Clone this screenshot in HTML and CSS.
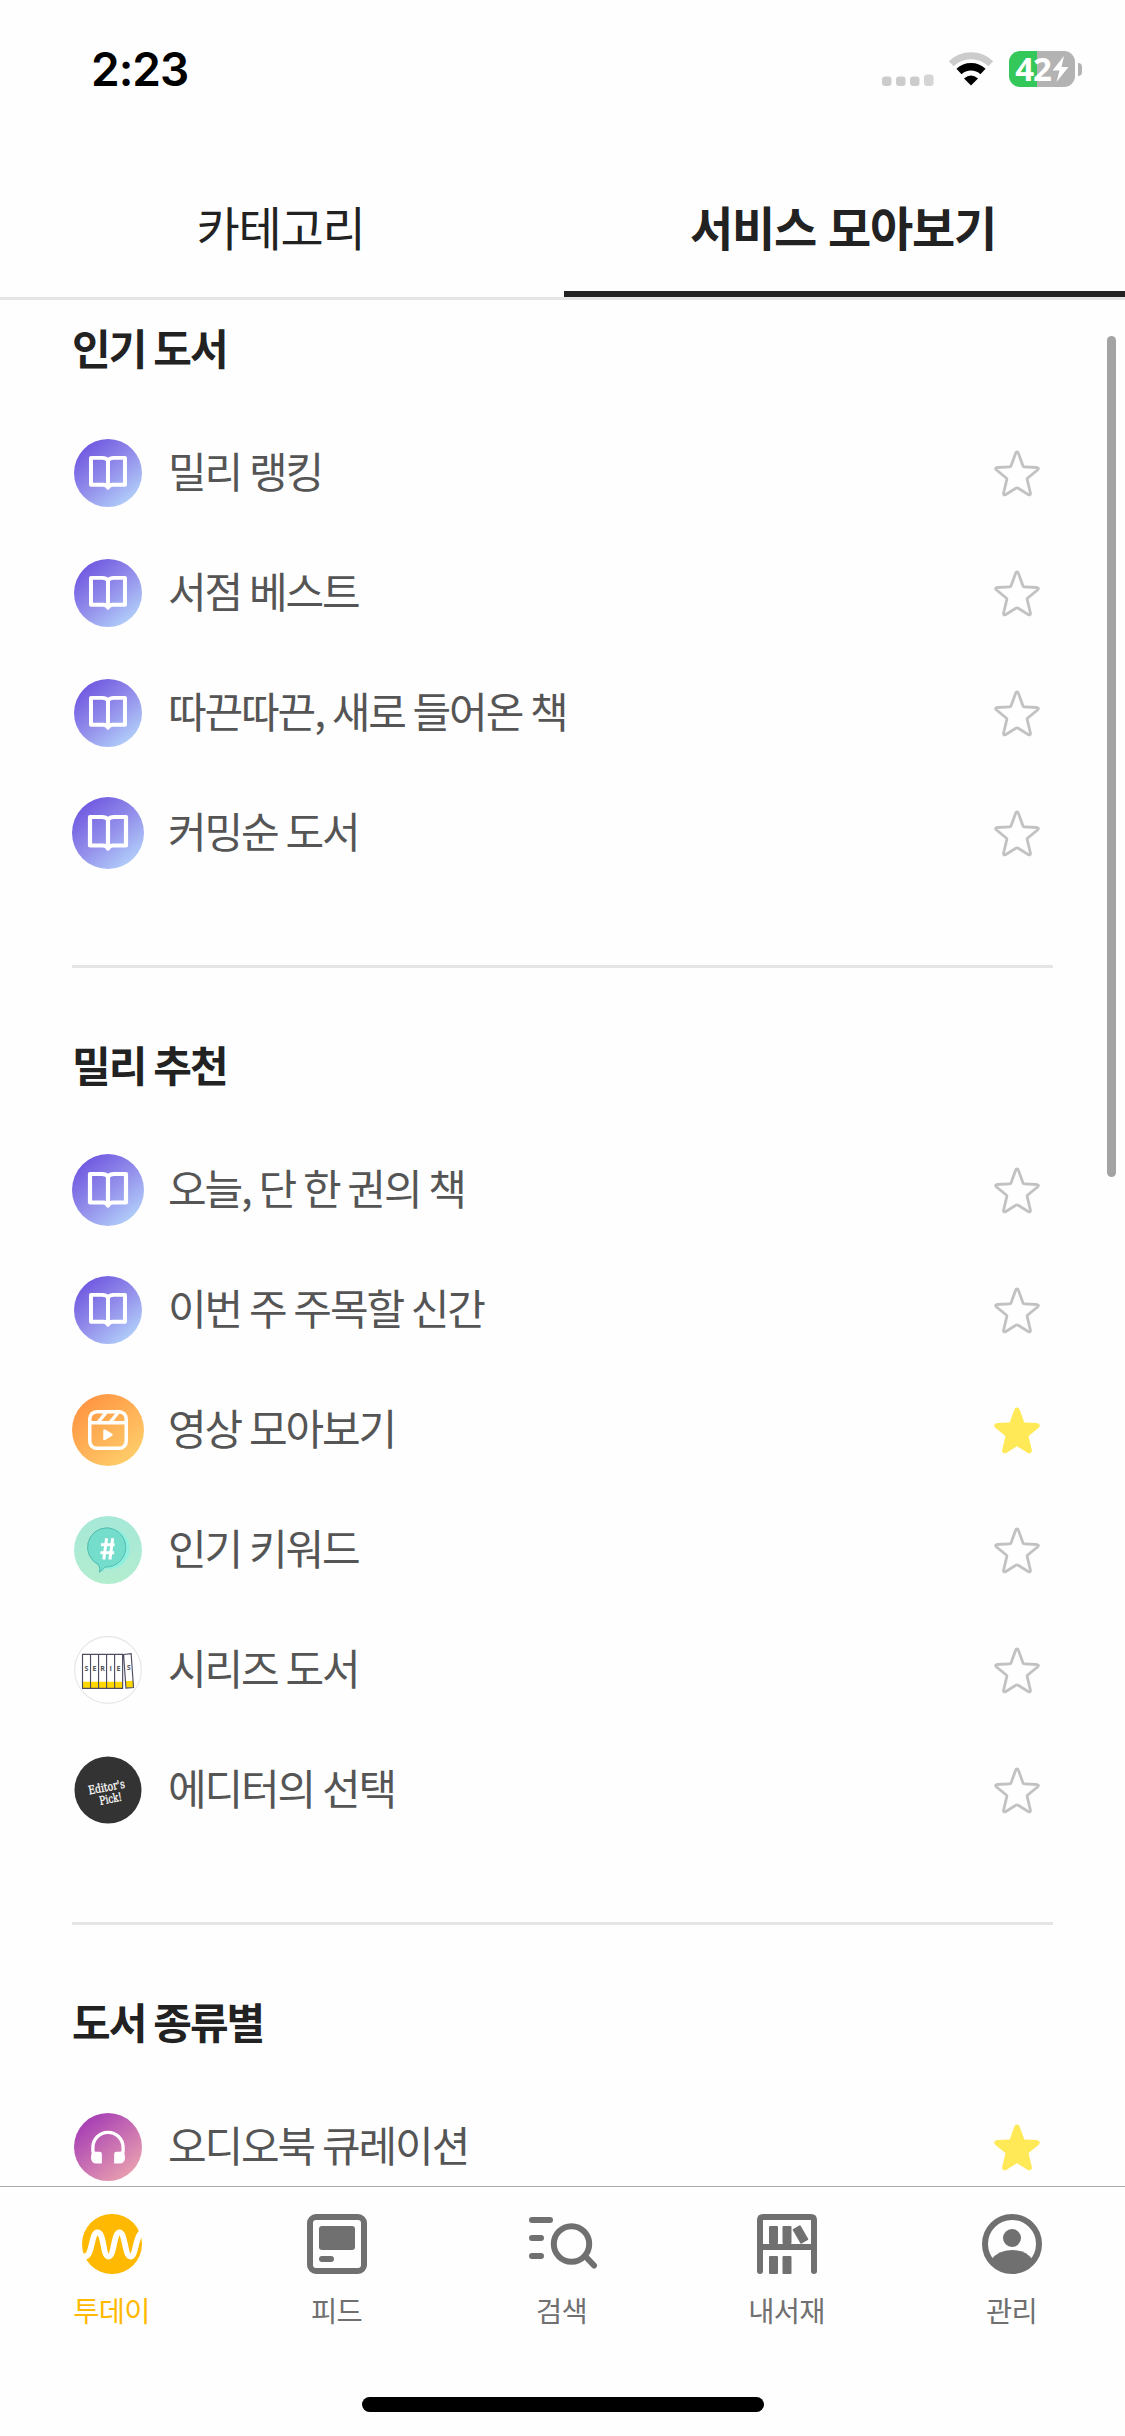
FILE: index.html
```html
<!DOCTYPE html>
<html lang="ko">
<head>
<meta charset="utf-8">
<title>서비스 모아보기</title>
<link rel="stylesheet" href="styles.css">
</head>
<body>
<svg class="defs" width="0" height="0" aria-hidden="true">
  <defs>
    <linearGradient id="g-book" x1="0.15" y1="0.1" x2="0.85" y2="0.95"><stop offset="0" stop-color="#6f58e0"/><stop offset="0.5" stop-color="#9490eb"/><stop offset="1" stop-color="#b3d3fb"/></linearGradient>
    <linearGradient id="g-video" x1="0.15" y1="0.1" x2="0.85" y2="0.95"><stop offset="0" stop-color="#ff9542"/><stop offset="1" stop-color="#ffcf6c"/></linearGradient>
    <linearGradient id="g-audio" x1="0.15" y1="0.1" x2="0.85" y2="0.95"><stop offset="0" stop-color="#a63db5"/><stop offset="1" stop-color="#eba3af"/></linearGradient>
    <linearGradient id="g-key" x1="0.5" y1="0" x2="0.5" y2="1"><stop offset="0" stop-color="#a6e8d8"/><stop offset="1" stop-color="#b2edcf"/></linearGradient>
  </defs>
  <symbol id="book" viewBox="0 0 72 72">
    <circle cx="36" cy="36" r="36" fill="url(#g-book)"/>
    <path d="M36 22.500C34.500 20.700 32.500 20 30 20H18V48.500H31C33.500 48.500 35 49.500 36 51.500C37 49.500 38.500 48.500 41 48.500H54V20H42C39.500 20 37.500 20.700 36 22.500V51" fill="none" stroke="#fff" stroke-width="4.200" stroke-linejoin="round"/>
  </symbol>
  <symbol id="video" viewBox="0 0 72 72">
    <circle cx="36" cy="36" r="36" fill="url(#g-video)"/>
    <g fill="none" stroke="#fff" stroke-width="3.500"><rect x="17.750" y="17.750" width="36.500" height="36.500" rx="7"/><path d="M17.500 28.700H54.500M26 28.500L34.500 18M38 28.500L46.500 18"/></g>
    <path d="M32.500 36.500L39.500 40.700L32.500 45Z" fill="#fff" stroke="#fff" stroke-width="2.500" stroke-linejoin="round"/>
  </symbol>
  <symbol id="keyword" viewBox="0 0 72 72">
    <circle cx="36" cy="36" r="36" fill="url(#g-key)"/>
    <path d="M37 13A21.500 21.500 0 1 1 33 55.500Q31 57.500 27 60Q28.500 56 27 53.500A22 22 0 0 1 37 13Z" fill="#8ff0df"/>
    <path d="M35 12.500A20.500 20.500 0 1 1 33 54Q31 56.500 27 59.500Q28 55 26 51.500A20.500 20.500 0 0 1 35 12.500Z" fill="#74ddcc" stroke="#4db9ab" stroke-width="1"/>
    <path d="M34.500 23.500L31.500 46M41 23.500L38 46M28.500 30.500H43M28 39H42.500" fill="none" stroke="#fff" stroke-width="3.200"/>
  </symbol>
  <symbol id="audio" viewBox="0 0 72 72">
    <circle cx="36" cy="36" r="36" fill="url(#g-audio)"/>
    <path d="M20 42V36.500A16 16 0 0 1 52 36.500V42" fill="none" stroke="#fff" stroke-width="3.500"/>
    <path d="M23 41H27Q29.500 41 29.500 43.500V53.500H24Q18 53.500 18 47Q18 43 20 40ZM49 41H45Q42.500 41 42.500 43.500V53.500H48Q54 53.500 54 47Q54 43 52 40Z" fill="#fff"/>
  </symbol>
  <symbol id="star" viewBox="0 0 48 48">
    <path d="M24 3Q25 3 25.500 4.500L30 17Q30.300 17.800 31.200 17.800L44 18.500Q46.500 19 44.500 21L34.700 29Q34 29.700 34.200 30.700L37.500 44.500Q37.500 46.600 35.500 45.700L25.200 39.300Q24 38.600 22.800 39.300L12.500 45.700Q10.500 46.600 10.500 44.500L13.800 30.700Q14 29.700 13.300 29L3.500 21Q1.500 19 4 18.500L16.800 17.800Q17.700 17.800 18 17L22.500 4.500Q23 3 24 3Z"/>
  </symbol>
</svg>

<div class="screen">
  <header class="status">
    <div class="time">2:23</div>
    <div class="indicators">
      <svg class="cell" width="52" height="12" viewBox="0 0 52 12" fill="#ccc"><rect x="0" y="2.500" width="9.500" height="9.500" rx="3"/><rect x="14" y="2.500" width="9.500" height="9.500" rx="3"/><rect x="28" y="2.500" width="9.500" height="9.500" rx="3"/><rect x="42" y="0.500" width="9.500" height="11.500" rx="3" fill="#d5d5d5"/></svg>
      <svg class="wifi" width="46" height="34" viewBox="0 0 46 34"><path d="M3.200 11.800A28.500 28.500 0 0 1 42.800 11.800" fill="none" stroke="#ccc" stroke-width="7"/><path d="M11 19.500A17.500 17.500 0 0 1 35 19.500" fill="none" stroke="#000" stroke-width="7.500"/><path d="M23 33.500L16 26.500Q23 20.500 30 26.500Z" fill="#000"/></svg>
      <div class="battery"><div class="cellbody"><span>42</span><svg width="17" height="26" viewBox="0 0 17 26"><path d="M12 0L0.500 14.500H7.500L4.500 26L16.500 11H9.500Z" fill="#fff"/></svg></div><div class="cap"></div></div>
    </div>
  </header>

  <nav class="tabs"><div class="tab">카테고리</div><div class="tab active">서비스 모아보기</div></nav>

  <main class="content">
    <section>
      <h2>인기 도서</h2>
      <ul>
        <li><svg class="ico"><use href="#book"/></svg><span>밀리 랭킹</span><svg class="star"><use href="#star"/></svg></li>
        <li><svg class="ico"><use href="#book"/></svg><span>서점 베스트</span><svg class="star"><use href="#star"/></svg></li>
        <li><svg class="ico"><use href="#book"/></svg><span>따끈따끈, 새로 들어온 책</span><svg class="star"><use href="#star"/></svg></li>
        <li><svg class="ico large"><use href="#book"/></svg><span>커밍순 도서</span><svg class="star"><use href="#star"/></svg></li>
      </ul>
    </section>
    <section>
      <h2>밀리 추천</h2>
      <ul>
        <li><svg class="ico large"><use href="#book"/></svg><span>오늘, 단 한 권의 책</span><svg class="star"><use href="#star"/></svg></li>
        <li><svg class="ico"><use href="#book"/></svg><span>이번 주 주목할 신간</span><svg class="star"><use href="#star"/></svg></li>
        <li><svg class="ico large"><use href="#video"/></svg><span>영상 모아보기</span><svg class="star on"><use href="#star"/></svg></li>
        <li><svg class="ico"><use href="#keyword"/></svg><span>인기 키워드</span><svg class="star"><use href="#star"/></svg></li>
        <li>
          <svg class="ico" viewBox="0 0 72 72">
            <circle cx="36" cy="36" r="35.300" fill="#fff" stroke="#e6e6e8" stroke-width="1.200"/>
            <path d="M9.500 48.500H51.500V55.500H9.500ZM54.500 48L62.500 47.500L63 54.500L55.500 55Z" fill="#ffd800"/>
            <path d="M9 19.500H51.500V55.500H9ZM17.500 19.500V55.500M26 19.500V55.500M34.500 19.500V55.500M43 19.500V55.500M52.500 19.600L60.500 18.600L63 54.500L55 55.200Z" fill="none" stroke="#4c4b60" stroke-width="1.200"/>
            <g class="series-text"><text x="13.300" y="37">S</text><text x="21.700" y="37">E</text><text x="30.200" y="37">R</text><text x="38.700" y="37">I</text><text x="47.200" y="37">E</text><text x="58" y="36.500">S</text></g>
          </svg>
          <span>시리즈 도서</span><svg class="star"><use href="#star"/></svg></li>
        <li>
          <svg class="ico" viewBox="0 0 72 72">
            <circle cx="36" cy="36" r="35.500" fill="#333"/>
            <g class="editor-text" transform="rotate(-11 36 36)"><text x="35" y="37" textLength="39" lengthAdjust="spacingAndGlyphs">Editor's</text><text x="37" y="50" textLength="24" lengthAdjust="spacingAndGlyphs">Pick!</text></g>
          </svg>
          <span>에디터의 선택</span><svg class="star"><use href="#star"/></svg></li>
      </ul>
    </section>
    <section>
      <h2>도서 종류별</h2>
      <ul>
        <li><svg class="ico"><use href="#audio"/></svg><span>오디오북 큐레이션</span><svg class="star on"><use href="#star"/></svg></li>
      </ul>
    </section>
    <div class="scrollbar"></div>
  </main>

  <footer class="bottom">
    <nav class="menu">
      <div class="item today"><svg width="60" height="60" viewBox="0 0 60 60"><circle cx="30" cy="30" r="30" fill="#ffb900"/><path d="M1 42C11 46 8.500 18.500 15.500 18.500S20.500 42.500 26.500 42.500S31.500 18.500 37.500 18.500S42.500 42.500 48.500 42.500S53 20 61 18" fill="none" stroke="#fff" stroke-width="5.800"/></svg><span>투데이</span></div>
      <div class="item"><svg width="60" height="60" viewBox="0 0 60 60"><rect x="3" y="3" width="54" height="54" rx="6" fill="none" stroke="#707070" stroke-width="6"/><rect x="12" y="12" width="36" height="24" rx="3" fill="#707070"/><rect x="12" y="42" width="15" height="6" rx="3" fill="#707070"/></svg><span>피드</span></div>
      <div class="item"><svg width="72" height="60" viewBox="0 0 72 60" fill="none" stroke="#707070" stroke-width="6" stroke-linecap="round"><path d="M6 6H24M6 24H15M6 42H15M60.500 43.500L68 51.500"/><circle cx="45.500" cy="30" r="17.700"/></svg><span>검색</span></div>
      <div class="item"><svg width="60" height="60" viewBox="0 0 60 60"><path d="M3 57V6Q3 3 6 3H54Q57 3 57 6V57M3 33H57" fill="none" stroke="#707070" stroke-width="6" stroke-linecap="round"/><g fill="#707070"><rect x="12" y="12" width="9" height="18" rx="1"/><rect x="25.500" y="12" width="9" height="18" rx="1"/><rect x="39" y="12" width="9" height="17" rx="1" transform="rotate(-30 43.500 20.500)"/><rect x="12" y="42" width="9" height="18" rx="1"/><rect x="25.500" y="42" width="9" height="18" rx="1"/></g></svg><span>내서재</span></div>
      <div class="item"><svg width="60" height="60" viewBox="0 0 60 60"><circle cx="30" cy="30" r="27" fill="none" stroke="#707070" stroke-width="6"/><circle cx="30" cy="24" r="9" fill="#707070"/><path d="M9 46Q16 36 30 36T51 46Q43 58 30 58T9 46Z" fill="#707070"/></svg><span>관리</span></div>
    </nav>
    <div class="home"></div>
  </footer>
</div>
</body>
</html>
```
FILE: styles.css
```css
* { box-sizing: border-box; }
body { margin: 0; background: #fff; font-family: "Noto Sans CJK KR", "Noto Sans", sans-serif; }
.defs { position: absolute; }
.screen { width: 1125px; height: 2436px; display: flex; flex-direction: column; overflow: hidden; background: #fefefe; }
.status { height: 162px; padding: 0 43px 0 91px; display: flex; justify-content: space-between; align-items: flex-start; }
.time { padding-top: 41px; font: 600 46px/56px Inter, sans-serif; letter-spacing: -1px; color: #000; }
.indicators { display: flex; padding-top: 51px; }
.cell { margin: 23px 14px 0 0; }
.wifi { margin: 1px 15px 0 0; }
.battery { display: flex; align-items: center; gap: 3px; height: 36px; }
.cellbody { width: 66px; height: 36px; border-radius: 11px; background: linear-gradient(90deg, #34c759 28px, #b3b3b3 28px); display: flex; align-items: center; justify-content: center; gap: 1px; color: #fff; font: 700 33px/36px "Open Sans", sans-serif; letter-spacing: -1px; }
.cap { width: 4px; height: 13px; border-radius: 0 5px 5px 0; background: #b3b3b3; }
.tabs { height: 138px; display: flex; border-bottom: 3px solid #e5e5e5; }
.tab { width: 564px; padding-right: 3px; text-align: center; font-size: 47px; line-height: 127px; letter-spacing: -1.2px; color: #222; }
.tab.active { width: 561px; font-weight: 700; border-bottom: 6px solid #222; }
.content { position: relative; height: 1886px; padding: 0 72px; overflow: hidden; }
section { padding: 63px 0 72px; border-bottom: 3px solid #e5e5e5; }
section:first-child { padding-top: 14px; }
section:last-of-type { border: 0; }
h2 { margin: 0 0 27px; height: 72px; line-height: 66px; font-size: 42px; font-weight: 700; letter-spacing: -2px; word-spacing: -1.8px; color: #222; }
ul { list-style: none; margin: 0; padding: 0; }
li { height: 120px; display: flex; align-items: center; font-size: 42px; letter-spacing: -2.1px; word-spacing: -1.8px; color: #555; }
li span { flex: 1; margin-left: 24px; padding-bottom: 6px; line-height: 60px; }
.ico { width: 68px; height: 68px; margin: 0 2px; }
.ico.large { width: 72px; height: 72px; margin: 0; }
.star { width: 48px; height: 48px; margin: 0 12px 0 0; fill: none; stroke: #c2c2c2; stroke-width: 2.8px; }
.star.on { fill: #ffe957; stroke: #ffe957; }
.scrollbar { position: absolute; right: 9px; top: 36px; width: 9px; height: 841px; border-radius: 5px; background: #a3a3a3; }
.series-text { font: 700 7.5px "Open Sans", sans-serif; text-anchor: middle; fill: #555; letter-spacing: 0; }
.editor-text { font: 400 12.5px "DejaVu Serif", serif; text-anchor: middle; fill: #fff; stroke: #fff; stroke-width: 0.3px; letter-spacing: 0; word-spacing: 0; }
.bottom { height: 250px; border-top: 1px solid #aaa; display: flex; flex-direction: column; justify-content: space-between; align-items: center; padding: 27px 0 24px; }
.menu { width: 100%; display: flex; }
.item { width: 225px; padding-right: 2px; display: flex; flex-direction: column; align-items: center; gap: 13px; font-size: 28.5px; line-height: 46px; letter-spacing: -0.8px; color: #707070; }
.today { color: #ffb900; }
.home { width: 402px; height: 15px; border-radius: 8px; background: #000; }
```
